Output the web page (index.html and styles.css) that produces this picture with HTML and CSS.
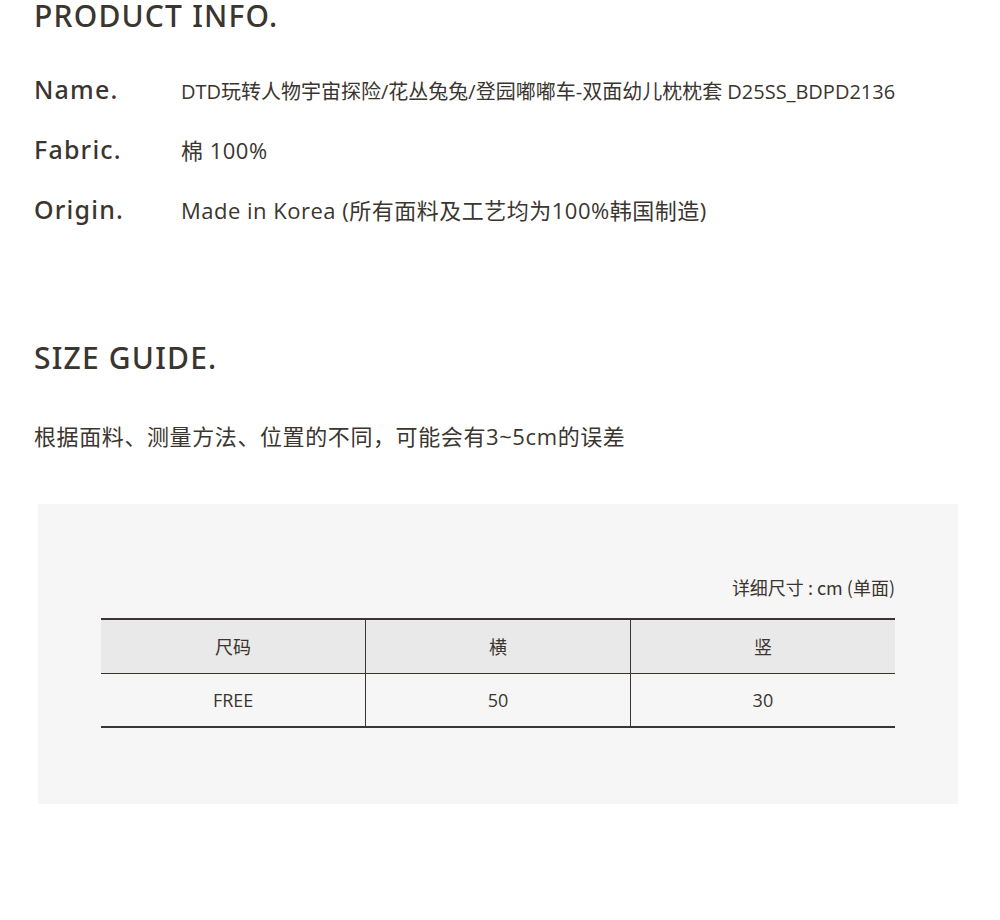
FILE: index.html
```html
<!DOCTYPE html>
<html lang="zh-CN">
<head>
    <meta charset="UTF-8">
    <meta name="viewport" content="width=device-width, initial-scale=1.0">
    <title>PRODUCT INFO</title>
    <link rel="stylesheet" href="styles.css">
</head>
<body>
    <section class="info-section">
        <h2 class="section-title">PRODUCT INFO.</h2>

        <div class="info-list">
            <div class="info-row">
                <div class="info-label">Name.</div>
                <div class="info-value">DTD玩转人物宇宙探险/花丛兔兔/登园嘟嘟车-双面幼儿枕枕套 D25SS_BDPD2136</div>
            </div>
            <div class="info-row">
                <div class="info-label">Fabric.</div>
                <div class="info-value info-value-lg">棉 100%</div>
            </div>
            <div class="info-row">
                <div class="info-label">Origin.</div>
                <div class="info-value info-value-lg">Made in Korea (所有面料及工艺均为100%韩国制造)</div>
            </div>
        </div>
    </section>

    <section class="size-section">
        <h2 class="section-title">SIZE GUIDE.</h2>
        <p class="size-desc">根据面料、测量方法、位置的不同，可能会有3~5cm的误差</p>

        <div class="size-box">
            <div class="size-unit">详细尺寸 : cm (单面)</div>
            <table class="size-table">
                <thead>
                    <tr>
                        <th>尺码</th>
                        <th>横</th>
                        <th>竖</th>
                    </tr>
                </thead>
                <tbody>
                    <tr>
                        <td>FREE</td>
                        <td>50</td>
                        <td>30</td>
                    </tr>
                </tbody>
            </table>
        </div>
    </section>
</body>
</html>
```

FILE: styles.css
```css
* {
    margin: 0;
    padding: 0;
    box-sizing: border-box;
}

body {
    background: #fff;
    color: #3b3530;
    font-family: 'Noto Sans', 'Noto Sans CJK SC', sans-serif;
    width: 1000px;
}

.section-title {
    font-size: 30px;
    font-weight: 500;
    line-height: 32px;
    letter-spacing: 1.2px;
}

.info-section {
    padding: 0 34px;
}

.info-list {
    margin-top: 40px;
}

.info-row {
    display: flex;
    align-items: baseline;
    height: 60px;
}

.info-label {
    width: 147px;
    font-size: 25px;
    font-weight: 500;
    letter-spacing: 1.2px;
}

.info-value {
    font-family: 'Open Sans', 'Noto Sans CJK SC', sans-serif;
    font-size: 20px;
    font-weight: 400;
}

/* 面料、产地两行字号略大 */
.info-value-lg {
    font-size: 22px;
    letter-spacing: 0.5px;
}

.size-section {
    margin-top: 90px;
}

.size-section .section-title {
    padding: 0 34px;
}

.size-desc {
    font-family: 'Open Sans', 'Noto Sans CJK SC', sans-serif;
    font-size: 22px;
    line-height: 30px;
    letter-spacing: 0.6px;
    padding: 0 34px;
    margin-top: 47px;
}

.size-box {
    margin: 53px 42px 0 38px;
    background: #f6f6f6;
    height: 300px;
    padding: 68px 63px 0 63px;
}

.size-unit {
    font-family: 'Noto Sans CJK SC', sans-serif;
    font-size: 18px;
    text-align: right;
    line-height: 30px;
}

.size-table {
    width: 100%;
    margin-top: 16px;
    table-layout: fixed;
    border-collapse: collapse;
    font-family: 'Open Sans', 'Noto Sans CJK SC', sans-serif;
    font-size: 18px;
    border-top: 2px solid #3b3530;
    border-bottom: 2px solid #3b3530;
}

.size-table th,
.size-table td {
    height: 54px;
    text-align: center;
    font-weight: 400;
    border-left: 1px solid #3b3530;
    border-right: 1px solid #3b3530;
}

.size-table th:first-child,
.size-table td:first-child {
    border-left: none;
}

.size-table th:last-child,
.size-table td:last-child {
    border-right: none;
}

.size-table thead th {
    background: #e9e9e9;
    border-bottom: 1px solid #3b3530;
}
```
